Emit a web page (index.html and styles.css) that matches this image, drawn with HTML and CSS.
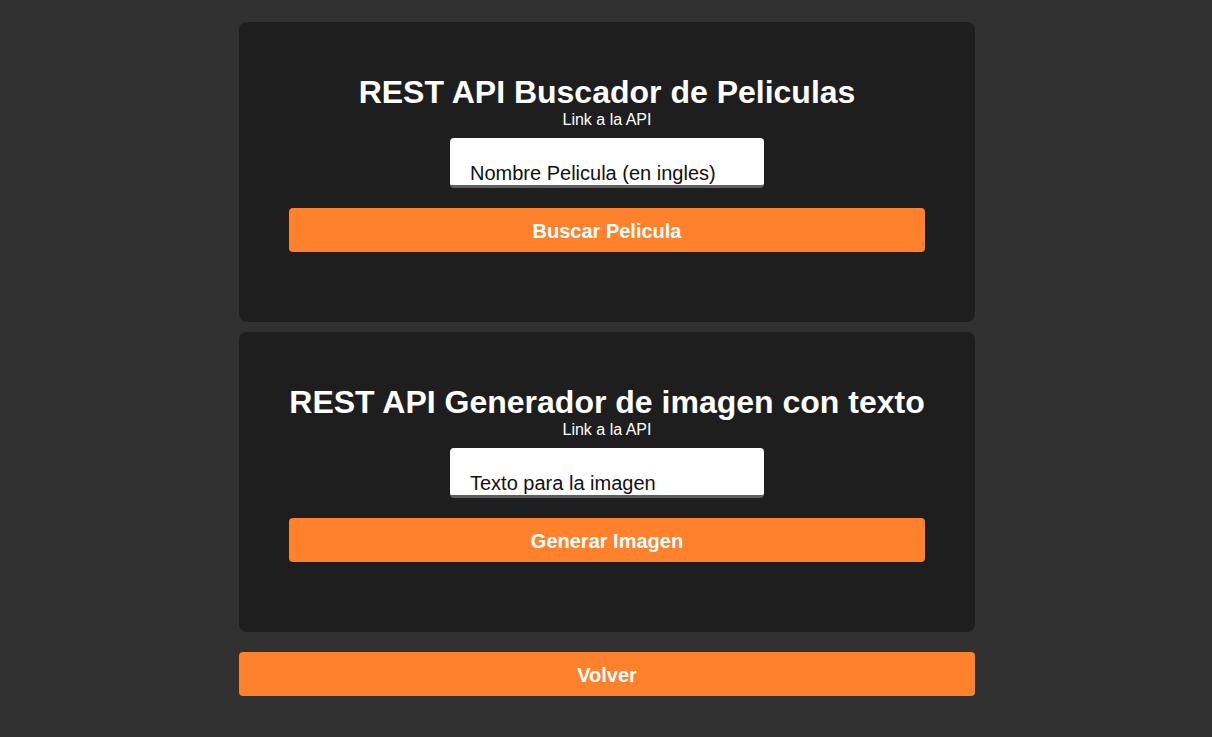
FILE: index.html
```html
<!DOCTYPE html>
<html lang="es">
<head>
<meta charset="utf-8">
<title>REST APIs</title>
<link rel="stylesheet" href="styles.css">
</head>
<body>
<main class="page">
  <section class="card">
    <h1 class="card-title">REST API Buscador de Peliculas</h1>
    <a class="api-link" href="#">Link a la API</a>
    <input class="field" type="text" placeholder="Nombre Pelicula (en ingles)">
    <button class="btn" type="button">Buscar Pelicula</button>
  </section>
  <section class="card">
    <h1 class="card-title">REST API Generador de imagen con texto</h1>
    <a class="api-link" href="#">Link a la API</a>
    <input class="field" type="text" placeholder="Texto para la imagen">
    <button class="btn" type="button">Generar Imagen</button>
  </section>
  <button class="btn btn-back" type="button">Volver</button>
</main>
</body>
</html>
```
FILE: styles.css
```css
* { box-sizing: border-box; }
html, body {
  margin: 0;
  padding: 0;
  background: #313131;
  font-family: "Liberation Sans", Arial, sans-serif;
  color: #fff;
}
body { padding-left: 2px; }
.page {
  width: 736px;
  margin: 0 auto;
  padding-top: 22px;
  display: flex;
  flex-direction: column;
}
.card {
  background: #1e1e1e;
  border-radius: 8px;
  padding: 50px 50px 70px;
  margin-bottom: 10px;
  display: flex;
  flex-direction: column;
  align-items: center;
  height: 300px;
}
.card-title {
  margin: 0;
  font-size: 32px;
  font-weight: bold;
  line-height: 38px;
  padding-top: 1px;
  text-align: center;
}
.api-link {
  color: #fff;
  text-decoration: none;
  font-size: 16px;
  line-height: 18px;
  margin-bottom: 9px;
}
.field {
  width: 314px;
  height: 50px;
  border: none;
  border-bottom: 3px solid #5e5e5e;
  border-radius: 4px;
  background: #fff;
  padding: 23px 20px 0;
  font-family: "Liberation Sans", Arial, sans-serif;
  font-size: 20px;
  color: #000;
  outline: none;
}
.field::placeholder { color: #111; opacity: 1; }
.btn {
  width: 100%;
  height: 44px;
  margin-top: 20px;
  border: none;
  border-radius: 4px;
  background: #ff812b;
  color: #fff;
  font-family: "Liberation Sans", Arial, sans-serif;
  font-size: 20px;
  font-weight: bold;
  padding: 2px 0 0;
  cursor: pointer;
}
.btn-back {
  margin-top: 10px;
}
```
